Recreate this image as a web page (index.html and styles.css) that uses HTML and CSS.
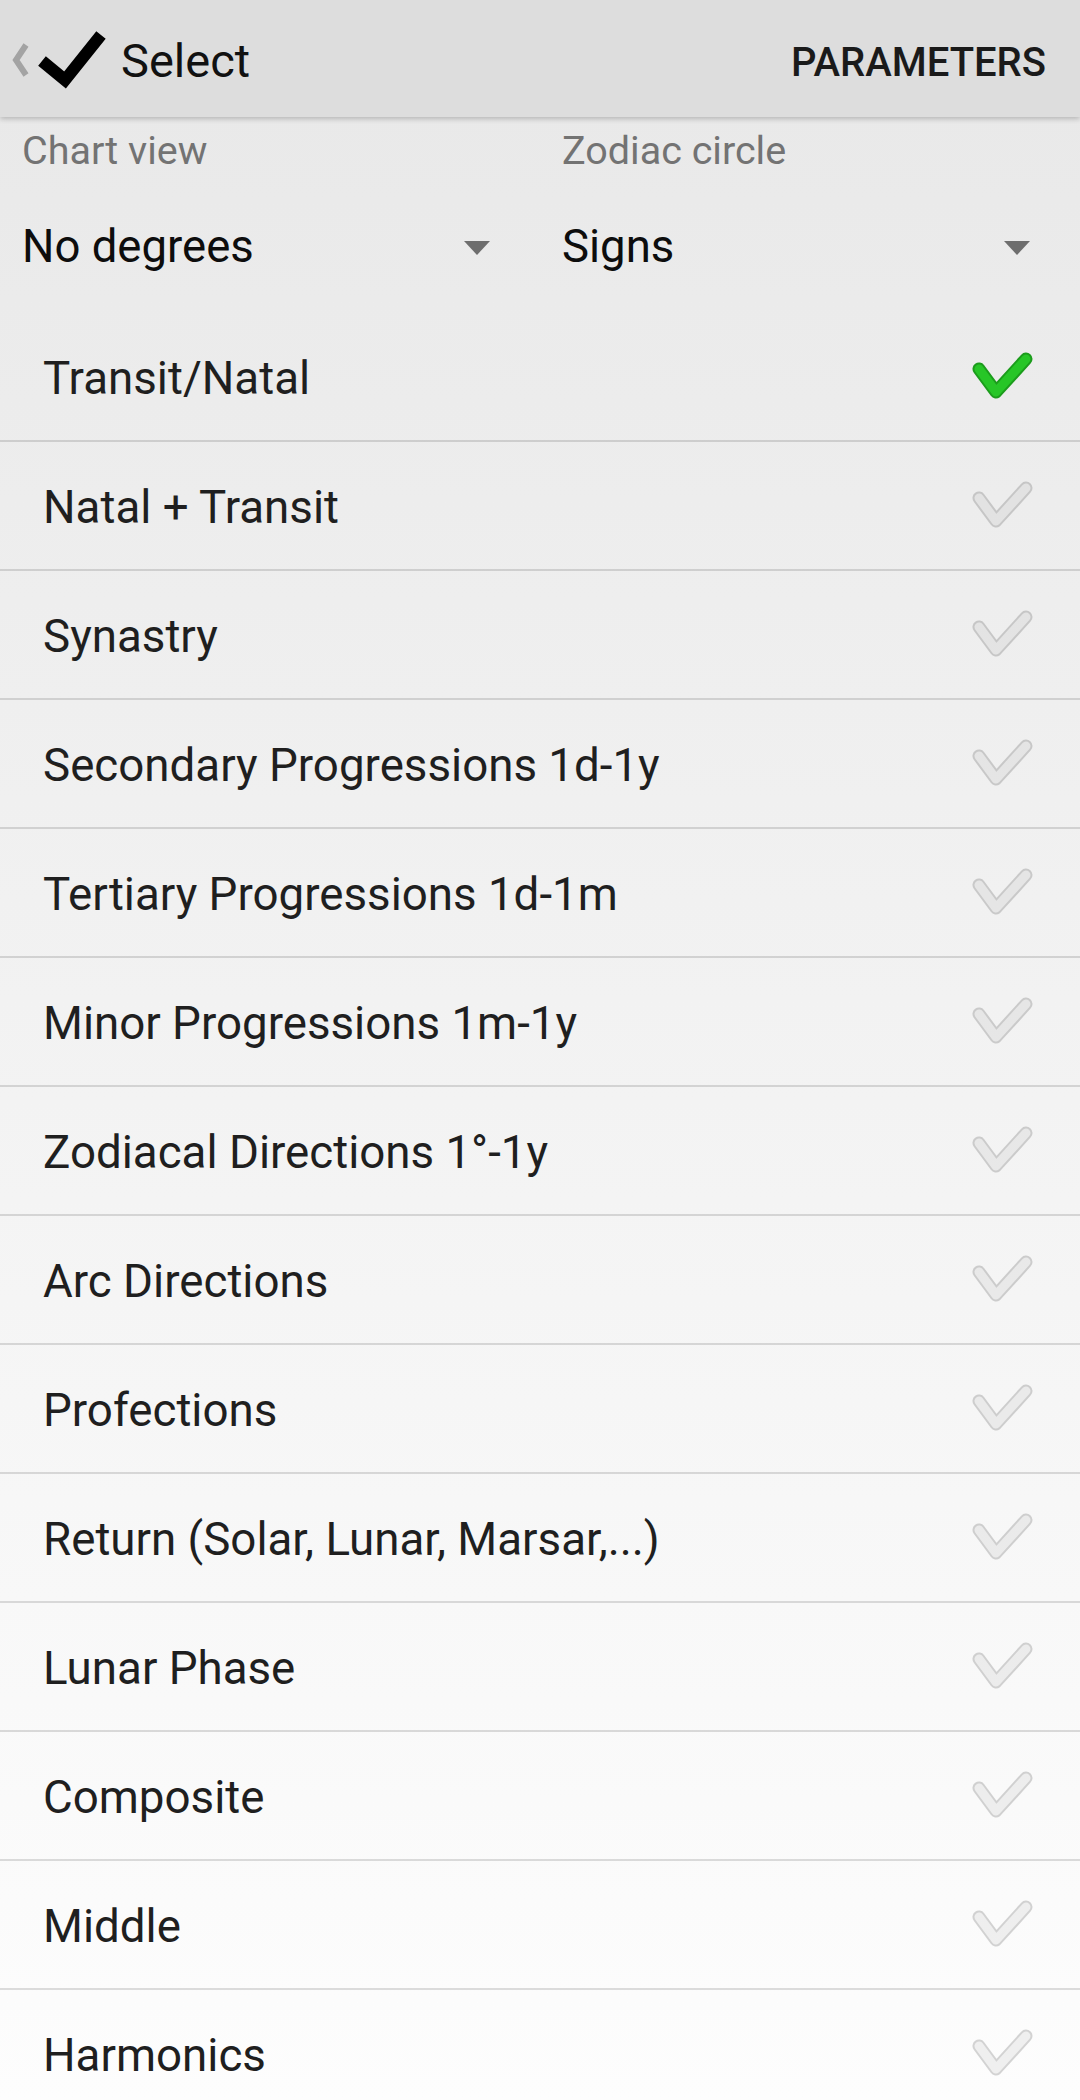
FILE: index.html
```
<!DOCTYPE html>
<html>
<head>
<meta charset="utf-8">
<link rel="stylesheet" href="styles.css">
</head>
<body>
<div class="page">
  <header class="topbar">
    <div class="topbar-left">
      <svg class="back" width="30" height="117" viewBox="0 0 30 117"><polyline points="26,45 16,60 26,75" fill="none" stroke="#a3a3a3" stroke-width="6" stroke-linejoin="miter"/></svg>
      <svg class="done" width="80" height="117" viewBox="0 0 80 117"><polyline points="12,61 35,80 71,35" fill="none" stroke="#000" stroke-width="12" stroke-linejoin="miter"/></svg>
      <span class="title">Select</span>
    </div>
    <span class="action">PARAMETERS</span>
  </header>

  <section class="settings">
    <div class="setting">
      <div class="setting-label">Chart view</div>
      <div class="setting-value"><span>No degrees</span><span class="caret"></span></div>
    </div>
    <div class="setting">
      <div class="setting-label">Zodiac circle</div>
      <div class="setting-value"><span>Signs</span><span class="caret"></span></div>
    </div>
  </section>

  <ul class="list">
    <li class="row"><span>Transit/Natal</span>
      <svg class="tick" width="72" height="60" viewBox="0 0 72 60"><polyline points="13,23 30,46 60,13" fill="none" stroke="#1c9c1c" stroke-width="13" stroke-linecap="round" stroke-linejoin="round"/><polyline points="13,23 30,46 60,13" fill="none" stroke="#27c627" stroke-width="9" stroke-linecap="round" stroke-linejoin="round"/></svg></li>
    <li class="row"><span>Natal + Transit</span><svg class="tick off" width="72" height="60" viewBox="0 0 72 60"><polyline class="t-out" points="13,23 30,46 60,13"/><polyline class="t-in" points="13,23 30,46 60,13"/></svg></li>
    <li class="row"><span>Synastry</span><svg class="tick off" width="72" height="60" viewBox="0 0 72 60"><polyline class="t-out" points="13,23 30,46 60,13"/><polyline class="t-in" points="13,23 30,46 60,13"/></svg></li>
    <li class="row"><span>Secondary Progressions 1d-1y</span><svg class="tick off" width="72" height="60" viewBox="0 0 72 60"><polyline class="t-out" points="13,23 30,46 60,13"/><polyline class="t-in" points="13,23 30,46 60,13"/></svg></li>
    <li class="row"><span>Tertiary Progressions 1d-1m</span><svg class="tick off" width="72" height="60" viewBox="0 0 72 60"><polyline class="t-out" points="13,23 30,46 60,13"/><polyline class="t-in" points="13,23 30,46 60,13"/></svg></li>
    <li class="row"><span>Minor Progressions 1m-1y</span><svg class="tick off" width="72" height="60" viewBox="0 0 72 60"><polyline class="t-out" points="13,23 30,46 60,13"/><polyline class="t-in" points="13,23 30,46 60,13"/></svg></li>
    <li class="row"><span>Zodiacal Directions 1°-1y</span><svg class="tick off" width="72" height="60" viewBox="0 0 72 60"><polyline class="t-out" points="13,23 30,46 60,13"/><polyline class="t-in" points="13,23 30,46 60,13"/></svg></li>
    <li class="row"><span>Arc Directions</span><svg class="tick off" width="72" height="60" viewBox="0 0 72 60"><polyline class="t-out" points="13,23 30,46 60,13"/><polyline class="t-in" points="13,23 30,46 60,13"/></svg></li>
    <li class="row"><span>Profections</span><svg class="tick off" width="72" height="60" viewBox="0 0 72 60"><polyline class="t-out" points="13,23 30,46 60,13"/><polyline class="t-in" points="13,23 30,46 60,13"/></svg></li>
    <li class="row"><span>Return (Solar, Lunar, Marsar,...)</span><svg class="tick off" width="72" height="60" viewBox="0 0 72 60"><polyline class="t-out" points="13,23 30,46 60,13"/><polyline class="t-in" points="13,23 30,46 60,13"/></svg></li>
    <li class="row"><span>Lunar Phase</span><svg class="tick off" width="72" height="60" viewBox="0 0 72 60"><polyline class="t-out" points="13,23 30,46 60,13"/><polyline class="t-in" points="13,23 30,46 60,13"/></svg></li>
    <li class="row"><span>Composite</span><svg class="tick off" width="72" height="60" viewBox="0 0 72 60"><polyline class="t-out" points="13,23 30,46 60,13"/><polyline class="t-in" points="13,23 30,46 60,13"/></svg></li>
    <li class="row"><span>Middle</span><svg class="tick off" width="72" height="60" viewBox="0 0 72 60"><polyline class="t-out" points="13,23 30,46 60,13"/><polyline class="t-in" points="13,23 30,46 60,13"/></svg></li>
    <li class="row"><span>Harmonics</span><svg class="tick off" width="72" height="60" viewBox="0 0 72 60"><polyline class="t-out" points="13,23 30,46 60,13"/><polyline class="t-in" points="13,23 30,46 60,13"/></svg></li>
  </ul>
</div>
</body>
</html>
```
FILE: styles.css
```
html, body {
  margin: 0;
  padding: 0;
}
body {
  width: 1080px;
  height: 2100px;
  overflow: hidden;
  font-family: Roboto, "Noto Sans", "Liberation Sans", sans-serif;
  background: linear-gradient(to bottom, #e8e8e8 0px, #ececec 400px, #fdfdfd 2100px);
  color: #212121;
}
.page {
  width: 1080px;
}
.topbar {
  height: 117px;
  background: #dddddd;
  display: flex;
  align-items: flex-start;
  justify-content: space-between;
  box-shadow: 0 2px 5px rgba(0, 0, 0, 0.22);
  position: relative;
  z-index: 1;
}
.topbar-left {
  display: flex;
  align-items: flex-start;
}
.back {
  display: block;
}
.done {
  display: block;
}
.title {
  font-size: 47px;
  color: #111;
  margin-left: 11px;
  margin-top: 31px;
  line-height: 60px;
}
.action {
  font-size: 40px;
  font-weight: 500;
  color: #1a1a1a;
  margin-right: 34px;
  margin-top: 33px;
  line-height: 60px;
}
.settings {
  display: grid;
  grid-template-columns: 540px 540px;
  padding-top: 9px;
  padding-bottom: 36px;
}
.setting {
  padding-left: 22px;
  padding-right: 50px;
}
.setting-label {
  font-size: 39.5px;
  line-height: 50px;
  color: #737373;
}
.setting-value {
  margin-top: 41px;
  font-size: 45.5px;
  line-height: 60px;
  color: #0d0d0d;
  display: flex;
  align-items: center;
  justify-content: space-between;
}
.caret {
  width: 0;
  height: 0;
  border-left: 13px solid transparent;
  border-right: 13px solid transparent;
  border-top: 14px solid #6e6e6e;
  margin-top: 2px;
}
.list {
  list-style: none;
  margin: 0;
  padding: 0;
}
.row {
  height: 123px;
  padding: 4px 42px 0 43px;
  line-height: 123px;
  font-size: 45.7px;
  color: #1f1f1f;
  display: flex;
  align-items: center;
  justify-content: space-between;
  border-bottom: 2px solid rgba(0, 0, 0, 0.13);
}
.tick {
  display: block;
  margin-top: -6px;
}
.tick.off {
  opacity: 0.16;
}
.t-out {
  fill: none;
  stroke: #000;
  stroke-width: 13;
  stroke-linecap: round;
  stroke-linejoin: round;
}
.t-in {
  fill: none;
  stroke: #adadad;
  stroke-width: 9;
  stroke-linecap: round;
  stroke-linejoin: round;
}
```
